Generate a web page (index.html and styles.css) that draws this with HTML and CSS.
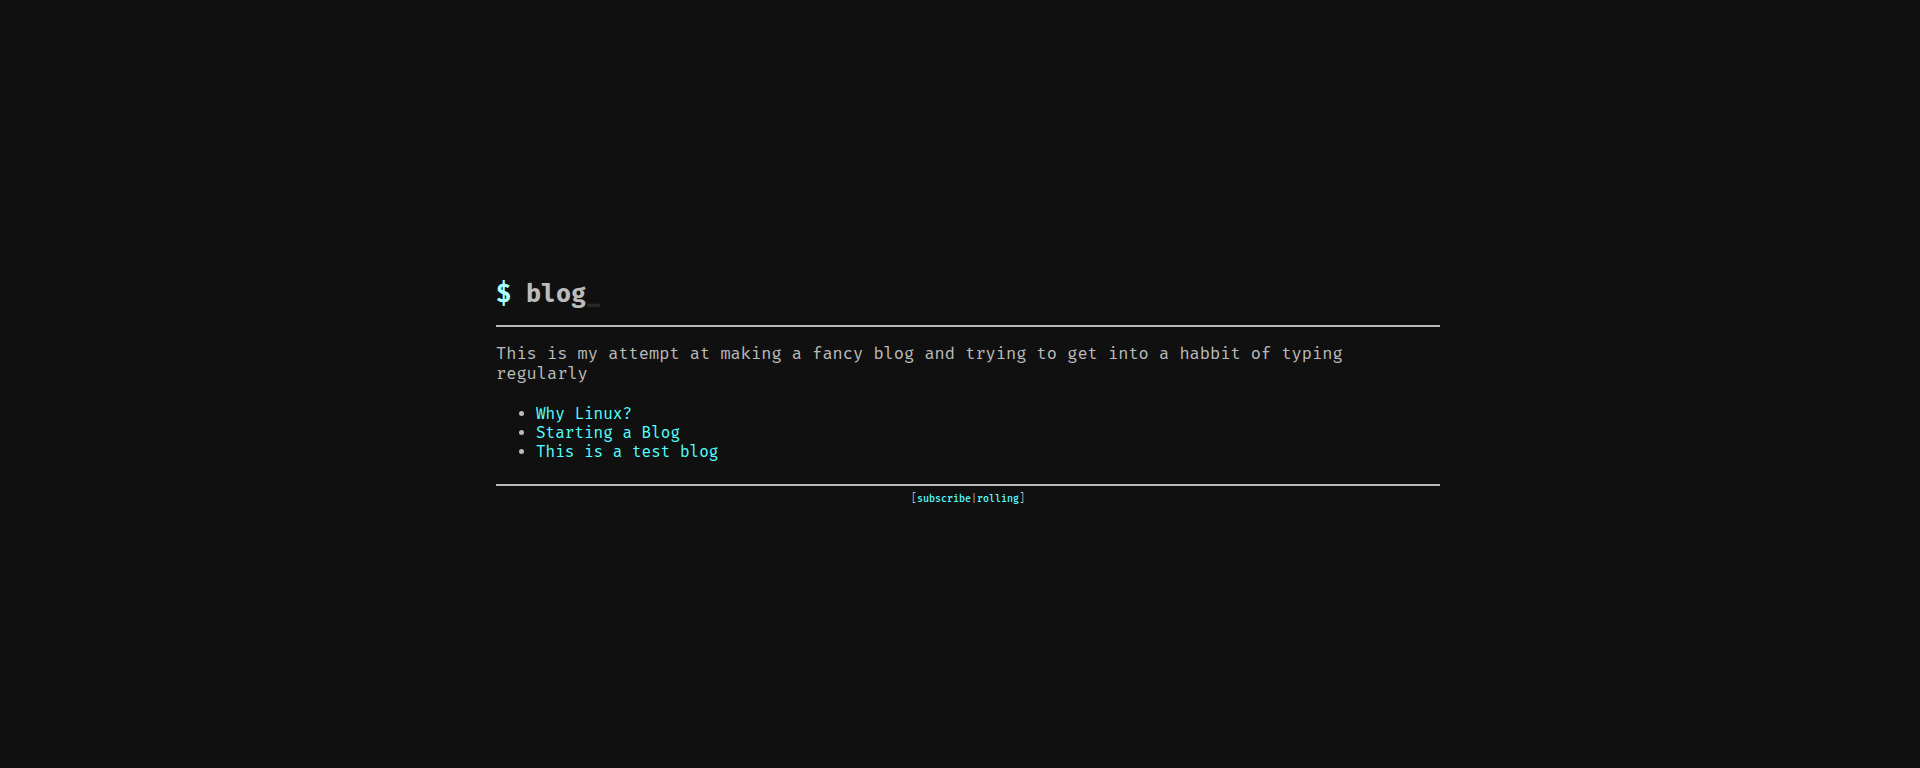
FILE: index.html
```html
<!DOCTYPE html>
<html lang="en">
<head>
<meta charset="utf-8">
<meta name="viewport" content="width=device-width, initial-scale=1">
<title>blog</title>
<link rel="stylesheet" href="styles.css">
</head>
<body>
<div class="page">
  <header class="header">
    <h1 class="title"><span class="prompt">$</span> blog<span class="cursor">_</span></h1>
  </header>
  <main class="content">
    <p class="intro">This is my attempt at making a fancy blog and trying to get into a habbit of typing regularly</p>
    <ul class="posts">
      <li><a href="#linux">Why Linux?</a></li>
      <li><a href="#starting">Starting a Blog</a></li>
      <li><a href="#test">This is a test blog</a></li>
    </ul>
  </main>
  <footer class="footer">[<a href="#subscribe">subscribe</a>|<a href="#rolling">rolling</a>]</footer>
</div>
</body>
</html>
```
FILE: styles.css
```css
* {
  box-sizing: border-box;
}

body {
  margin: 0;
  min-height: 100vh;
  padding: 16px 0 0 16px;
  display: flex;
  align-items: center;
  justify-content: center;
  background: #101010;
  color: #bbb;
  font-family: "Fira Mono", "DejaVu Sans Mono", monospace;
}

.page {
  width: 100%;
  max-width: 944px;
}

.header {
  padding-bottom: 15px;
  border-bottom: 2px solid #bbb;
}

.title {
  margin: 0;
  font-size: 25px;
  line-height: 32px;
}

.prompt {
  color: #aff;
}

.cursor {
  color: #282828;
}

.content {
  padding: 17px 0 23px;
  border-bottom: 2px solid #bbb;
}

.intro {
  margin: 0 0 20px;
  font-size: 17px;
  line-height: 20px;
}

.posts {
  margin: 0;
  padding-left: 40px;
  font-size: 16px;
  line-height: 19px;
}

a {
  color: #5ff;
  text-decoration: none;
}

.footer {
  padding-top: 5px;
  font-size: 10px;
  line-height: 16px;
  text-align: center;
}

.footer a {
  font-weight: 500;
}
```
